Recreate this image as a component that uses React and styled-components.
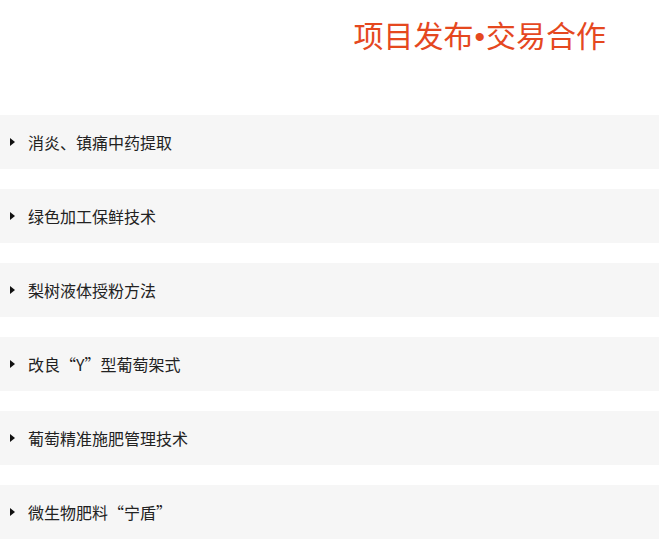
import React from "react";
import styled, { createGlobalStyle } from "styled-components";

const GlobalStyle = createGlobalStyle`
  html, body {
    margin: 0;
    padding: 0;
    background: #ffffff;
  }
  body {
    font-family: "Noto Sans CJK SC", "Liberation Sans", sans-serif;
  }
`;

const Page = styled.div`
  width: 659px;
  overflow: hidden;
`;

const Header = styled.header`
  height: 115px;
  display: flex;
  justify-content: flex-end;
  align-items: flex-start;
  padding-right: 53px;
  box-sizing: border-box;
`;

const Title = styled.h1`
  margin: 14px 0 0;
  font-size: 30px;
  font-weight: 400;
  line-height: 40px;
  color: #e5481f;
  white-space: nowrap;

  .dot {
    font-family: "Liberation Sans", sans-serif;
    padding: 0 1px;
  }
`;

const List = styled.ul`
  list-style: none;
  margin: 0;
  padding: 0;
  display: flex;
  flex-direction: column;
  gap: 20px;
`;

const Item = styled.li`
  height: 54px;
  background: #f6f6f6;
  display: flex;
  align-items: center;
  padding: 0 0 1px 10px;
  box-sizing: border-box;
  gap: 13px;
  font-size: 16px;
  color: #222222;
  cursor: pointer;
`;

const Caret = styled.span`
  width: 0;
  height: 0;
  border-left: 5px solid #111111;
  border-top: 4px solid transparent;
  border-bottom: 4px solid transparent;
`;

const projects = [
  "消炎、镇痛中药提取",
  "绿色加工保鲜技术",
  "梨树液体授粉方法",
  "改良“Y”型葡萄架式",
  "葡萄精准施肥管理技术",
  "微生物肥料“宁盾”",
];

const App = () => {
  return (
    <Page>
      <GlobalStyle />
      <Header>
        <Title>
          项目发布<span className="dot">•</span>交易合作
        </Title>
      </Header>
      <List>
        {projects.map((name) => (
          <Item key={name}>
            <Caret />
            <span>{name}</span>
          </Item>
        ))}
      </List>
    </Page>
  );
};

export default App;
